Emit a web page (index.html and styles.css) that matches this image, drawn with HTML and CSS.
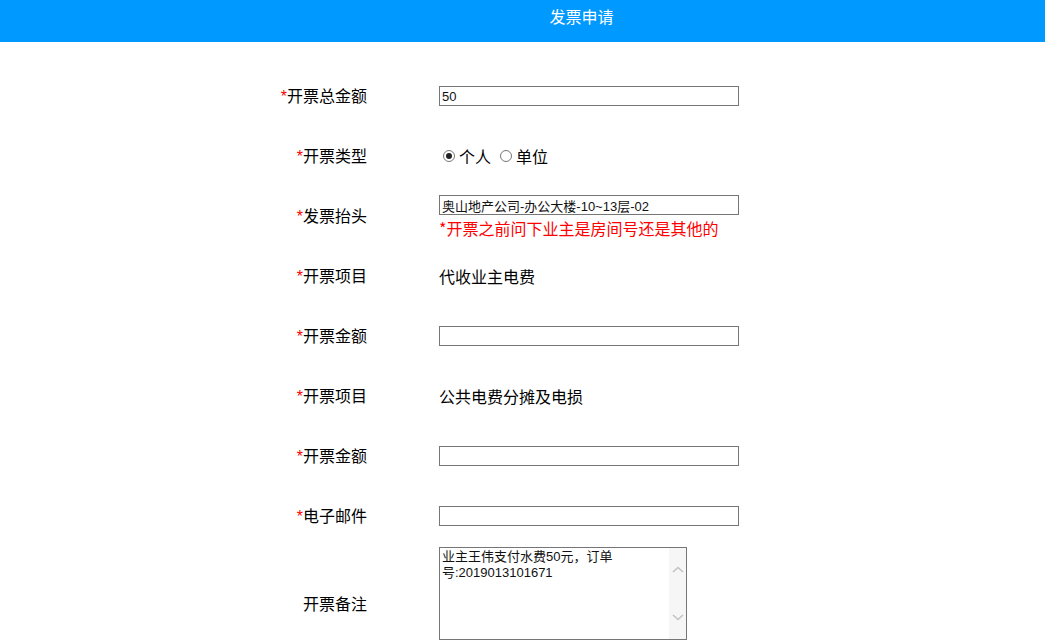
FILE: index.html
```html
<!DOCTYPE html>
<html lang="zh-CN">
<head>
<meta charset="utf-8">
<title>发票申请</title>
<link rel="stylesheet" href="styles.css">
</head>
<body>
<header class="topbar"><h1 class="title">发票申请</h1></header>
<form class="form">
  <label class="label"><span class="req">*</span>开票总金额</label>
  <div class="field"><input class="input" type="text" value="50"></div>

  <label class="label"><span class="req">*</span>开票类型</label>
  <div class="field radios">
    <label class="radio"><input type="radio" name="t" class="rd" checked>个人</label>
    <label class="radio"><input type="radio" name="t" class="rd">单位</label>
  </div>

  <label class="label"><span class="req">*</span>发票抬头</label>
  <div class="field stack">
    <input class="input" type="text" value="奥山地产公司-办公大楼-10~13层-02">
    <div class="hint">*开票之前问下业主是房间号还是其他的</div>
  </div>

  <label class="label"><span class="req">*</span>开票项目</label>
  <div class="field text">代收业主电费</div>

  <label class="label"><span class="req">*</span>开票金额</label>
  <div class="field"><input class="input" type="text"></div>

  <label class="label"><span class="req">*</span>开票项目</label>
  <div class="field text">公共电费分摊及电损</div>

  <label class="label"><span class="req">*</span>开票金额</label>
  <div class="field"><input class="input" type="text"></div>

  <label class="label"><span class="req">*</span>电子邮件</label>
  <div class="field"><input class="input" type="text"></div>

  <label class="label">开票备注</label>
  <div class="field">
    <div class="area">
      <textarea class="area-text">业主王伟支付水费50元，订单号:2019013101671</textarea>
      <div class="sbar">
        <svg class="chev" width="14" height="10" viewBox="0 0 14 10"><path d="M2 7 L7 2.5 L12 7" fill="none" stroke="#c3c3c3" stroke-width="1.6"/></svg>
        <svg class="chev" width="14" height="10" viewBox="0 0 14 10"><path d="M2 3 L7 7.5 L12 3" fill="none" stroke="#c3c3c3" stroke-width="1.6"/></svg>
      </div>
    </div>
  </div>
</form>
</body>
</html>
```
FILE: styles.css
```css
html, body {
  margin: 0;
  padding: 0;
  background: #fff;
}
body {
  font-family: "Noto Sans CJK SC", "Liberation Sans", sans-serif;
  color: #000;
}
.topbar {
  background: #0099ff;
  height: 42px;
  padding-left: 118px;
  box-sizing: border-box;
}
.title {
  margin: 0;
  font-size: 16px;
  font-weight: normal;
  color: #fff;
  text-align: center;
  line-height: 32px;
}
.form {
  width: 639px;
  margin: 24px auto 0;
  display: grid;
  grid-template-columns: 164px 403px;
  column-gap: 72px;
  grid-auto-rows: minmax(60px, auto);
  align-items: center;
}
.label {
  text-align: right;
  font-size: 16px;
  line-height: 22px;
}
.req {
  color: #ff0000;
  font-family: "Liberation Sans", sans-serif;
}
.field {
  font-size: 16px;
}
.text {
  line-height: 22px;
}
.input {
  display: block;
  width: 300px;
  height: 20px;
  box-sizing: border-box;
  border: 1px solid #767676;
  padding: 1px 2px;
  margin: 0;
  font-family: "Liberation Sans", "Noto Sans CJK SC", sans-serif;
  font-size: 13px;
  color: #111;
  outline: none;
}
.stack .hint {
  margin-top: 4px;
  color: #ff0000;
  font-size: 16px;
  line-height: 18px;
}
.radios {
  display: flex;
  align-items: center;
  gap: 9px;
  padding-left: 4px;
  line-height: 22px;
}
.radio {
  display: flex;
  align-items: center;
  gap: 4px;
}
.rd {
  appearance: none;
  -webkit-appearance: none;
  width: 12px;
  height: 12px;
  margin: 0;
  border: 1px solid #777;
  border-radius: 50%;
  box-sizing: border-box;
  background: #fff;
  position: relative;
}
.rd:checked::after {
  content: "";
  position: absolute;
  left: 2px;
  top: 2px;
  width: 6px;
  height: 6px;
  border-radius: 50%;
  background: #222;
}
.area {
  display: flex;
  width: 248px;
  height: 93px;
  box-sizing: border-box;
  border: 1px solid #767676;
  margin-bottom: 19px;
  margin-top: 1px;
}
.area-text {
  flex: 1;
  border: none;
  resize: none;
  outline: none;
  padding: 1px 2px;
  margin: 0;
  font-family: "Liberation Sans", "Noto Sans CJK SC", sans-serif;
  font-size: 13px;
  line-height: 16px;
  color: #111;
  overflow: hidden;
}
.sbar {
  width: 17px;
  background: #f6f6f6;
  display: flex;
  flex-direction: column;
  justify-content: space-between;
  align-items: center;
  padding: 17px 0 17px;
}
.chev {
  display: block;
}
```
